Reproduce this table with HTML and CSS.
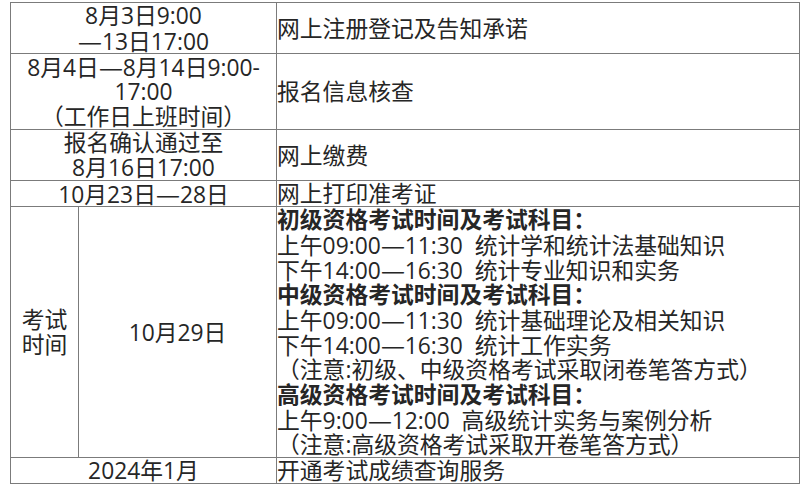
FILE: index.html
```html
<!DOCTYPE html>
<html lang="zh-CN">
<head>
<meta charset="utf-8">
<title>考试时间安排</title>
<link rel="stylesheet" href="styles.css">
</head>
<body>
<table class="schedule">
  <colgroup>
    <col class="c-a">
    <col class="c-b">
    <col class="c-c">
  </colgroup>
  <tbody>
    <tr>
      <td colspan="2" class="when">
        <div class="ln">8月3日9:00</div>
        <div class="ln"><span class="d">—</span>13日17:00</div>
      </td>
      <td class="what"><div class="ln">网上注册登记及告知承诺</div></td>
    </tr>
    <tr>
      <td colspan="2" class="when">
        <div class="ln">8月4日<span class="d">—</span>8月14日9:00-</div>
        <div class="ln">17:00</div>
        <div class="ln">（工作日上班时间）</div>
      </td>
      <td class="what"><div class="ln">报名信息核查</div></td>
    </tr>
    <tr>
      <td colspan="2" class="when">
        <div class="ln">报名确认通过至</div>
        <div class="ln">8月16日17:00</div>
      </td>
      <td class="what"><div class="ln">网上缴费</div></td>
    </tr>
    <tr>
      <td colspan="2" class="when"><div class="ln">10月23日<span class="d">—</span>28日</div></td>
      <td class="what"><div class="ln">网上打印准考证</div></td>
    </tr>
    <tr>
      <td class="when">
        <div class="ln">考试</div>
        <div class="ln">时间</div>
      </td>
      <td class="when"><div class="ln">10月29日</div></td>
      <td class="what top">
        <div class="ln head">初级资格考试时间及考试科目：</div>
        <div class="ln">上午09:00<span class="d">—</span>11:30&#160;&#160;统计学和统计法基础知识</div>
        <div class="ln">下午14:00<span class="d">—</span>16:30&#160;&#160;统计专业知识和实务</div>
        <div class="ln head">中级资格考试时间及考试科目：</div>
        <div class="ln">上午09:00<span class="d">—</span>11:30&#160;&#160;统计基础理论及相关知识</div>
        <div class="ln">下午14:00<span class="d">—</span>16:30&#160;&#160;统计工作实务</div>
        <div class="ln">（注意:初级、中级资格考试采取闭卷笔答方式）</div>
        <div class="ln head">高级资格考试时间及考试科目：</div>
        <div class="ln">上午9:00<span class="d">—</span>12:00&#160;&#160;高级统计实务与案例分析</div>
        <div class="ln">（注意:高级资格考试采取开卷笔答方式）</div>
      </td>
    </tr>
    <tr>
      <td colspan="2" class="when"><div class="ln">2024年1月</div></td>
      <td class="what"><div class="ln">开通考试成绩查询服务</div></td>
    </tr>
  </tbody>
</table>
</body>
</html>
```

FILE: styles.css
```css
html, body {
  margin: 0;
  padding: 0;
  background: #ffffff;
}

body {
  padding: 2px 0 0 10px;
  font-family: "Open Sans", "Noto Sans CJK SC", sans-serif;
  font-size: 22.8px;
  line-height: 25px;
  color: #262626;
}

.schedule {
  border-collapse: collapse;
  table-layout: fixed;
  width: 789px;
}

.c-a { width: 68px; }
.c-b { width: 198px; }
.c-c { width: 523px; }

.schedule td {
  border: 1px solid #7b7b7b;
  padding: 0;
  vertical-align: middle;
}

.ln {
  height: 25px;
  line-height: 25px;
  white-space: nowrap;
}

.when {
  text-align: center;
}

.what {
  text-align: left;
  padding-left: 1px;
}

.what.top {
  vertical-align: top;
}

.d {
  font-family: "Noto Sans CJK SC", sans-serif;
  display: inline-block;
  width: 1.05em;
  text-align: center;
  transform: scaleX(1.2);
}

.head {
  font-weight: 700;
}
```
